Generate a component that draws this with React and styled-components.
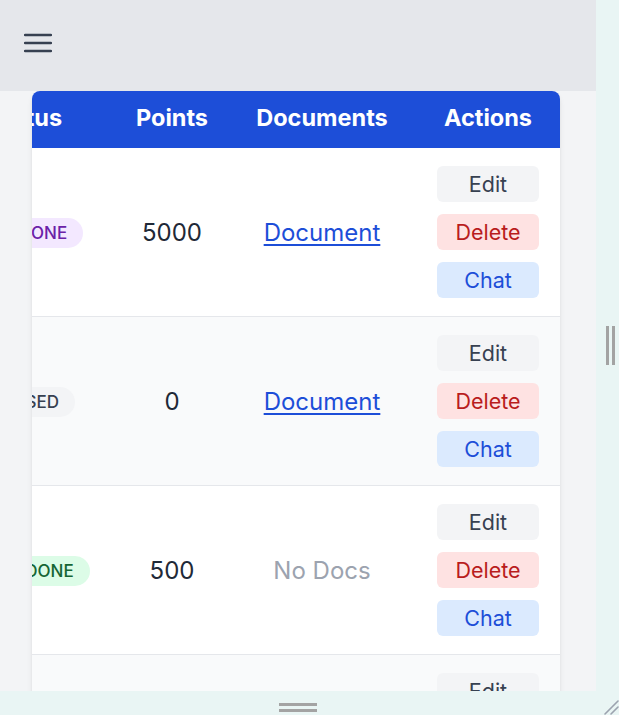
import React, { useLayoutEffect, useRef } from 'react';
import styled, { createGlobalStyle } from 'styled-components';

const rows = [
  { project: 'Landing page', client: 'Acme', status: 'PART ONE', tone: 'purple', points: 5000, doc: true },
  { project: 'Mobile app', client: 'Globex', status: 'CLOSED', tone: 'gray', points: 0, doc: true },
  { project: 'Data import', client: 'Initech', status: 'HALF DONE', tone: 'green', points: 500, doc: false },
  { project: 'Dashboard', client: 'Umbrella', status: 'CLOSED', tone: 'gray', points: 120, doc: false },
];

const App = () => {
  const scrollRef = useRef(null);

  // the table is wider than the card; it sits scrolled to its right end
  useLayoutEffect(() => {
    if (scrollRef.current) {
      scrollRef.current.scrollLeft = scrollRef.current.scrollWidth;
    }
  }, []);

  return (
    <Frame>
      <GlobalStyle />
      <Viewport>
        <Header>
          <MenuButton type="button" aria-label="menu">
            <svg width="28" height="20" viewBox="0 0 28 20" fill="none">
              <path d="M1 2h26M1 10h26M1 18h26" stroke="#374151" strokeWidth="2.4" strokeLinecap="round" />
            </svg>
          </MenuButton>
        </Header>

        <Content>
          <Card>
            <Scroller ref={scrollRef}>
              <Table>
                <colgroup>
                  <col style={{ width: 200 }} />
                  <col style={{ width: 160 }} />
                  <col style={{ width: 182 }} />
                  <col style={{ width: 112 }} />
                  <col style={{ width: 188 }} />
                  <col style={{ width: 144 }} />
                </colgroup>
                <thead>
                  <tr>
                    <Th>Project</Th>
                    <Th>Client</Th>
                    <Th>Status</Th>
                    <Th>Points</Th>
                    <Th>Documents</Th>
                    <Th>Actions</Th>
                  </tr>
                </thead>
                <tbody>
                  {rows.map((row, i) => (
                    <Row key={i} $striped={i % 2 === 1}>
                      <Td>{row.project}</Td>
                      <Td>{row.client}</Td>
                      <Td>
                        <Badge $tone={row.tone}>{row.status}</Badge>
                      </Td>
                      <Td>{row.points}</Td>
                      <Td>
                        {row.doc ? <DocLink href="#">Document</DocLink> : <NoDocs>No Docs</NoDocs>}
                      </Td>
                      <Td>
                        <Actions>
                          <ActionButton type="button" $variant="edit">Edit</ActionButton>
                          <ActionButton type="button" $variant="delete">Delete</ActionButton>
                          <ActionButton type="button" $variant="chat">Chat</ActionButton>
                        </Actions>
                      </Td>
                    </Row>
                  ))}
                </tbody>
              </Table>
            </Scroller>
          </Card>
        </Content>
      </Viewport>

      <SideGutter>
        <VerticalGrip />
      </SideGutter>

      <BottomGutter>
        <HorizontalGrip />
        <Corner>
          <svg width="18" height="18" viewBox="0 0 18 18">
            <path d="M17 4L4 17M17 10L10 17" stroke="#9ca3af" strokeWidth="1.6" strokeLinecap="round" />
          </svg>
        </Corner>
      </BottomGutter>
    </Frame>
  );
};

export default App;

const GlobalStyle = createGlobalStyle`
  html, body {
    margin: 0;
    height: 100%;
    overflow: hidden;
  }

  #root {
    height: 100%;
  }

  * {
    box-sizing: border-box;
  }
`;

const Frame = styled.div`
  display: grid;
  grid-template-columns: 1fr 23px;
  grid-template-rows: 1fr 24px;
  height: 100vh;
  background: #e9f5f4;
  font-family: Inter, 'Noto Sans', sans-serif;
`;

const Viewport = styled.div`
  grid-column: 1;
  grid-row: 1;
  overflow: hidden;
  background: #f3f4f6;
  display: flex;
  flex-direction: column;
`;

const Header = styled.header`
  flex: none;
  height: 91px;
  background: #e5e7eb;
  display: flex;
  align-items: center;
  padding-left: 24px;
`;

const MenuButton = styled.button`
  display: flex;
  padding: 0;
  border: none;
  background: none;
  cursor: pointer;
  margin-top: -6px;
`;

const Content = styled.main`
  padding: 0 36px 0 32px;
`;

const Card = styled.div`
  background: #fff;
  border-radius: 8px;
  overflow: hidden;
  box-shadow: 0 4px 6px -1px rgba(0, 0, 0, 0.1), 0 2px 4px -2px rgba(0, 0, 0, 0.1);
`;

const Scroller = styled.div`
  overflow-x: auto;
  scrollbar-width: none;

  &::-webkit-scrollbar {
    display: none;
  }
`;

const Table = styled.table`
  table-layout: fixed;
  border-collapse: collapse;
  width: 986px;
`;

const Th = styled.th`
  height: 57px;
  padding: 0 0 4px;
  background: #1d4ed8;
  color: #fff;
  font-size: 23.5px;
  font-weight: 700;
  text-align: center;
  white-space: nowrap;
`;

const Row = styled.tr`
  background: ${p => (p.$striped ? '#f9fafb' : '#fff')};
  border-bottom: 1px solid #e5e7eb;
`;

const Td = styled.td`
  padding: 18px 0;
  text-align: center;
  vertical-align: middle;
  font-size: 24px;
  color: #1f2937;
  white-space: nowrap;
`;

const badgeTones = {
  purple: ['#f3e8ff', '#6b21a8'],
  gray: ['#f3f4f6', '#374151'],
  green: ['#dcfce7', '#166534'],
};

const Badge = styled.span`
  display: inline-block;
  padding: 0 16px;
  height: 30px;
  line-height: 30px;
  border-radius: 999px;
  font-size: 17px;
  font-weight: 500;
  background: ${p => badgeTones[p.$tone][0]};
  color: ${p => badgeTones[p.$tone][1]};
`;

const DocLink = styled.a`
  color: #1d4ed8;
  text-decoration: underline;
  text-underline-offset: 3px;
`;

const NoDocs = styled.span`
  color: #9ca3af;
`;

const Actions = styled.div`
  display: flex;
  flex-direction: column;
  align-items: center;
  gap: 12px;
`;

const buttonTones = {
  edit: ['#f3f4f6', '#374151'],
  delete: ['#fee2e2', '#b91c1c'],
  chat: ['#dbeafe', '#1d4ed8'],
};

const ActionButton = styled.button`
  width: 102px;
  height: 36px;
  border: none;
  border-radius: 6px;
  font-family: inherit;
  font-size: 21.5px;
  cursor: pointer;
  background: ${p => buttonTones[p.$variant][0]};
  color: ${p => buttonTones[p.$variant][1]};
`;

const SideGutter = styled.div`
  grid-column: 2;
  grid-row: 1;
  display: flex;
  align-items: center;
  justify-content: center;
`;

const VerticalGrip = styled.div`
  width: 9px;
  height: 39px;
  border-left: 3px solid #a3a3a3;
  border-right: 3px solid #a3a3a3;
  margin-left: 5px;
`;

const BottomGutter = styled.div`
  grid-column: 1 / 3;
  grid-row: 2;
  position: relative;
  display: flex;
  justify-content: center;
  padding-right: 23px;
  padding-top: 12px;
`;

const HorizontalGrip = styled.div`
  width: 38px;
  height: 9px;
  border-top: 3px solid #a3a3a3;
  border-bottom: 3px solid #a3a3a3;
`;

const Corner = styled.div`
  position: absolute;
  right: 0;
  bottom: 0;
  display: flex;
`;
